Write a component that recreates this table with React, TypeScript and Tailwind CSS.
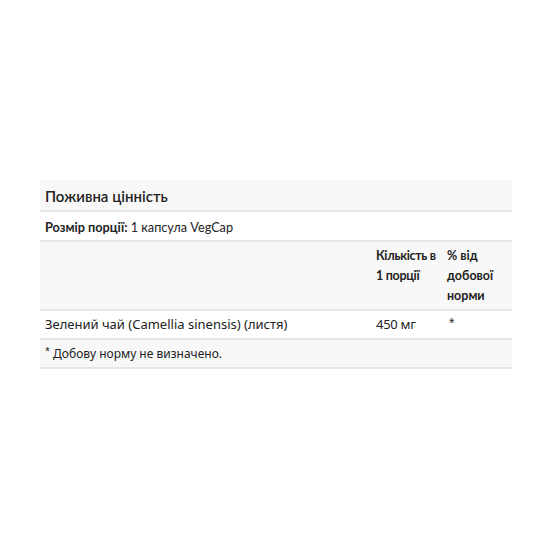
import React from "react";

export default function App() {
  const lato = { fontFamily: "Lato, 'Noto Sans', sans-serif" };
  return (
    <div className="w-[560px] h-[560px] bg-white flex flex-col pt-[180px] pl-[40px]" style={lato}>
      <div className="w-[472px] flex flex-col text-[#222]">
        <div className="bg-[#f8f8f8] h-[32px] flex items-center px-[5px] pt-[3px] border-b-2 border-[#e6e6e6]">
          <span className="text-[15px] font-semibold">Поживна цінність</span>
        </div>
        <div className="h-[30px] flex items-center px-[5px] pt-[3px] border-b-2 border-[#e6e6e6] text-[12.7px]">
          <span className="font-bold">Розмір порції:</span>
          <span>&nbsp;1 капсула VegCap</span>
        </div>
        <div className="bg-[#f8f8f8] grid grid-cols-[331px_71px_70px] border-b-2 border-[#e6e6e6] text-[12.5px] font-bold leading-[20px] pt-[4px] pb-[3px]">
          <div></div>
          <div className="px-[5px] whitespace-nowrap tracking-[-0.3px]">
            Кількість в<br />1 порції
          </div>
          <div className="px-[5px] whitespace-nowrap">
            % від<br />добової<br />норми
          </div>
        </div>
        <div className="h-[29px] grid grid-cols-[331px_71px_70px] items-center pt-[1px] border-b-2 border-[#e6e6e6] text-[13px]" style={{ fontFamily: "'Noto Sans', sans-serif" }}>
          <div className="px-[5px] whitespace-nowrap">Зелений чай (Camellia sinensis) (листя)</div>
          <div className="px-[5px] tracking-[-0.3px]">450 мг</div>
          <div className="px-[7px] text-[10px] -mt-[6px]">*</div>
        </div>
        <div className="bg-[#f8f8f8] h-[29px] flex items-center px-[5px] pt-[1px] border-b-2 border-[#e6e6e6] text-[12px]" style={{ fontFamily: "'Noto Sans', sans-serif" }}>
          <span className="text-[9px] -mt-[6px]">*</span>
          <span>&nbsp;Добову норму не визначено.</span>
        </div>
      </div>
    </div>
  );
}
